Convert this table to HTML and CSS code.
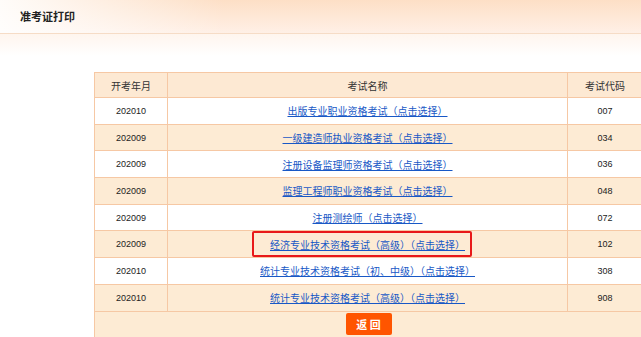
FILE: index.html
```html
<!DOCTYPE html>
<html lang="zh-CN">
<head>
  <meta charset="UTF-8">
  <title>准考证打印</title>
  <link rel="stylesheet" href="styles.css">
</head>
<body>
  <div class="page-top">
    <div class="page-title">准考证打印</div>
  </div>

  <table class="exam-table">
    <thead>
      <tr>
        <th class="col-date">开考年月</th>
        <th class="col-name">考试名称</th>
        <th class="col-code">考试代码</th>
      </tr>
    </thead>
    <tbody>
      <tr>
        <td>202010</td>
        <td><a href="#">出版专业职业资格考试（点击选择）</a></td>
        <td>007</td>
      </tr>
      <tr class="alt">
        <td>202009</td>
        <td><a href="#">一级建造师执业资格考试（点击选择）</a></td>
        <td>034</td>
      </tr>
      <tr>
        <td>202009</td>
        <td><a href="#">注册设备监理师资格考试（点击选择）</a></td>
        <td>036</td>
      </tr>
      <tr class="alt">
        <td>202009</td>
        <td><a href="#">监理工程师职业资格考试（点击选择）</a></td>
        <td>048</td>
      </tr>
      <tr>
        <td>202009</td>
        <td><a href="#">注册测绘师（点击选择）</a></td>
        <td>072</td>
      </tr>
      <tr class="alt">
        <td>202009</td>
        <td class="marked"><a href="#">经济专业技术资格考试（高级）（点击选择）</a><span class="mark-box"></span></td>
        <td>102</td>
      </tr>
      <tr>
        <td>202010</td>
        <td><a href="#">统计专业技术资格考试（初、中级）（点击选择）</a></td>
        <td>308</td>
      </tr>
      <tr class="alt">
        <td>202010</td>
        <td><a href="#">统计专业技术资格考试（高级）（点击选择）</a></td>
        <td>908</td>
      </tr>
      <tr class="alt action-row">
        <td colspan="3"><button class="back-btn">返 回</button></td>
      </tr>
    </tbody>
  </table>
</body>
</html>
```

FILE: styles.css
```css
html, body {
  margin: 0;
  padding: 0;
  height: 100%;
  overflow: hidden;
}
body {
  font-family: "Noto Sans CJK SC", "Liberation Sans", sans-serif;
  font-size: 10px;
  color: #333;
  background: #fff;
}
.page-top {
  height: 33px;
  border-bottom: 1px solid #f6dcc6;
  background: linear-gradient(90deg, rgba(255,255,255,0.9) 0%, rgba(255,255,255,0) 35%),
              linear-gradient(180deg, #fddfc6 0%, #fff0e6 100%);
  position: relative;
}
.page-top::after {
  content: "";
  position: absolute;
  left: 0;
  right: 0;
  top: 34px;
  height: 22px;
  background: linear-gradient(180deg, #fff5ee 0%, #fff 100%);
}
.page-title {
  padding: 9px 0 0 20px;
  font-size: 11px;
  font-weight: bold;
  color: #222;
  line-height: 14px;
}
.exam-table {
  margin: 38px 0 0 94px;
  width: 549px;
  border-collapse: collapse;
  table-layout: fixed;
}
.exam-table th,
.exam-table td {
  border: 1px solid #f6c8a4;
  text-align: center;
  padding: 0;
}
.exam-table th {
  height: 24px;
  font-weight: normal;
  font-size: 10px;
  background: #fde9d3;
  color: #333;
}
.exam-table td {
  height: 25.7px;
  background: #fff;
  font-size: 9px;
  color: #222;
  font-family: "Liberation Sans", sans-serif;
}
.exam-table tr.alt td {
  background: #fdebd4;
}
.col-date { width: 72px; }
.col-name { width: 399px; }
.exam-table a {
  color: #1858c6;
  text-decoration: underline;
  font-family: "Noto Sans CJK SC", sans-serif;
  font-size: 10px;
}
.marked {
  position: relative;
}
.mark-box {
  position: absolute;
  left: 84px;
  top: 0;
  width: 216px;
  height: 22px;
  border: 2px solid #e8191a;
  border-radius: 2px;
}
.action-row td {
  height: 30px;
  vertical-align: top;
  border-bottom: none;
}
.back-btn {
  margin-top: 1px;
  width: 46px;
  height: 22px;
  border: none;
  border-radius: 2px;
  background: #ff5500;
  color: #fff;
  font-family: "Noto Sans CJK SC", sans-serif;
  font-size: 11px;
  font-weight: bold;
  padding: 0;
  cursor: pointer;
}
```
